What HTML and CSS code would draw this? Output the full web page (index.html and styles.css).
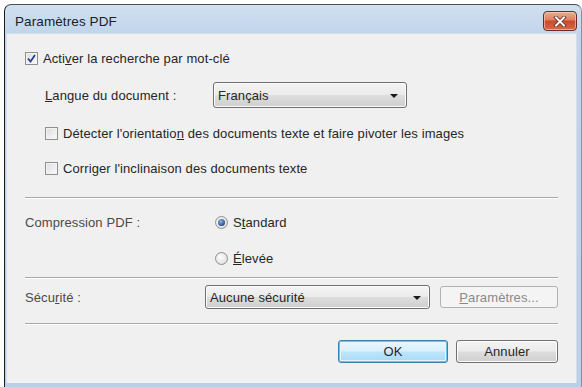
FILE: index.html
```html
<!DOCTYPE html>
<html lang="fr">

<head>
    <meta charset="UTF-8">
    <meta name="viewport" content="width=device-width, initial-scale=1.0">
    <title>Paramètres PDF</title>
    <link rel="stylesheet" href="styles.css">
</head>

<body>

    <div class="window">
        <div class="titlebar">
            <span class="titlebar__text">Paramètres PDF</span>
            <div class="titlebar__close">
                <svg width="14" height="11" viewBox="0 0 14 11">
                    <path d="M3 1.5 L11 9.5 M11 1.5 L3 9.5" stroke="#5a2a20" stroke-width="3.6" stroke-linecap="square"/>
                    <path d="M3 1.5 L11 9.5 M11 1.5 L3 9.5" stroke="#fff" stroke-width="2" stroke-linecap="square"/>
                </svg>
            </div>
        </div>

        <div class="client">
            <div class="row row--first">
                <span class="check check--on">
                    <svg width="9" height="9" viewBox="0 0 9 9"><path d="M1 4.5 L3.5 7.5 L8 1" fill="none" stroke="#2b3f8c" stroke-width="1.8"/></svg>
                </span>
                <span class="row__text">Acti<u>v</u>er la recherche par mot-clé</span>
            </div>

            <div class="row row--field row--indent row--lang">
                <span class="field__label field__label--lang"><u>L</u>angue du document :</span>
                <div class="combo combo--lang">
                    <span>Français</span>
                    <span class="combo__arrow"></span>
                </div>
            </div>

            <div class="row row--indent row--check2">
                <span class="check"></span>
                <span class="row__text">Détecter l'orientatio<u>n</u> des documents texte et faire pivoter les images</span>
            </div>

            <div class="row row--indent row--check3">
                <span class="check"></span>
                <span class="row__text">Corri<u>g</u>er l'inclinaison des documents texte</span>
            </div>

            <div class="sep sep--1"></div>

            <div class="row row--comp">
                <span class="field__label field__label--comp field__label--muted">Compression PDF :</span>
                <span class="radio radio--on"></span>
                <span class="row__text">S<u>t</u>andard</span>
            </div>

            <div class="row row--elev">
                <span class="field__label field__label--comp"></span>
                <span class="radio"></span>
                <span class="row__text"><u>É</u>levée</span>
            </div>

            <div class="sep sep--2"></div>

            <div class="row row--field row--sec">
                <span class="field__label field__label--sec field__label--muted">Sécu<u>r</u>ité :</span>
                <div class="combo combo--sec">
                    <span>Aucune sécurité</span>
                    <span class="combo__arrow"></span>
                </div>
                <div class="btn btn--disabled"><u>P</u>aramètres...</div>
            </div>

            <div class="sep sep--3"></div>

            <div class="buttons">
                <div class="btn btn--default">OK</div>
                <div class="btn btn--cancel">Annuler</div>
            </div>
        </div>
    </div>

</body>

</html>
```

FILE: styles.css
```css
* {
    margin: 0;
    padding: 0;
    box-sizing: border-box;
}

:root {
    --text: #262626;
    --sep: #a0a0a0;
}

body {
    font-family: "Liberation Sans", Arial, sans-serif;
    font-size: 13px;
    letter-spacing: 0.1px;
    color: var(--text);
    background: #ffffff;
    width: 582px;
    height: 387px;
    overflow: hidden;
}

.window {
    margin: 4px 0 0 4px;
    width: 578px;
    height: 383px;
    border-top: 1px solid #4d4f55;
    border-left: 1px solid #1b1b1b;
    border-right: 1px solid #8193a8;
    border-radius: 7px 7px 0 0;
    background: linear-gradient(to bottom, #d0e0f0 0, #c0d5eb 30px, #bad0e8 100%);
    padding: 0 4px 4px 1px;
    display: flex;
    flex-direction: column;
}

.titlebar {
    height: 28px;
    display: flex;
    align-items: center;
    justify-content: space-between;
    padding-left: 9px;
    padding-right: 0;
}

.titlebar__text {
    font-size: 13.5px;
    color: #1c1c2c;
    margin-top: 4px;
}

.titlebar__close {
    width: 34px;
    height: 20px;
    margin-top: 4px;
    border: 1px solid #6b2a22;
    border-radius: 4px;
    background: linear-gradient(to bottom, #eeac92 0, #de7f5e 45%, #c9482a 50%, #d8694a 100%);
    display: flex;
    align-items: center;
    justify-content: center;
    box-shadow: inset 0 0 0 1px rgba(255, 210, 200, .6);
}

.client {
    flex: 1;
    background: #f0f0f0;
    border: 1px solid #d4dde8;
    border-bottom: none;
    padding: 13px 18px 0 18px;
    display: flex;
    flex-direction: column;
}

.row {
    display: flex;
    align-items: center;
    height: 22px;
}

.row--field {
    height: 26px;
}

.row--indent {
    padding-left: 20px;
}

.row--lang { margin-top: 13px; }
.row--check2 { margin-top: 14px; }
.row--check3 { margin-top: 13px; }
.row--comp { margin-top: 12px; }
.row--elev { margin-top: 14px; }
.row--sec { margin-top: 5px; }

.row__text {
    white-space: nowrap;
}

.check {
    width: 13px;
    height: 13px;
    border: 1px solid #8e8f8f;
    background: linear-gradient(135deg, #dcdcdc, #fbfbfb);
    box-shadow: inset 0 0 0 1px #f4f4f4;
    margin: 0 5px 0 0;
    display: flex;
    align-items: center;
    justify-content: center;
    flex-shrink: 0;
}

.radio {
    width: 13px;
    height: 13px;
    border-radius: 50%;
    border: 1px solid #8e8f8f;
    background: radial-gradient(circle at 40% 40%, #fdfdfd, #d6d6d6);
    margin-right: 5px;
    flex-shrink: 0;
    position: relative;
}

.radio--on::after {
    content: "";
    position: absolute;
    left: 2px;
    top: 2px;
    width: 7px;
    height: 7px;
    border-radius: 50%;
    background: radial-gradient(circle at 40% 35%, #8fb4dc, #2a4f8a 70%);
}

.field__label {
    white-space: nowrap;
    flex-shrink: 0;
}

.field__label--muted {
    color: #4a4a4a;
}

.field__label--lang { width: 168px; }
.field__label--comp { width: 190px; }
.field__label--sec { width: 180px; }

.combo {
    height: 26px;
    border: 1px solid #707070;
    border-radius: 3px;
    background: linear-gradient(to bottom, #f4f4f4 0, #ebebeb 48%, #dddddd 52%, #cfcfcf 100%);
    box-shadow: inset 0 0 0 1px #fbfbfb;
    display: flex;
    align-items: center;
    justify-content: space-between;
    padding: 0 8px 0 4px;
}

.combo--lang { width: 194px; }

.combo--sec {
    width: 225px;
    height: 24px;
}

.combo__arrow {
    width: 0;
    height: 0;
    border-left: 4px solid transparent;
    border-right: 4px solid transparent;
    border-top: 4px solid #1a1a1a;
    margin-top: 1px;
}

.sep {
    height: 2px;
    border-top: 1px solid #a9a9a9;
    border-bottom: 1px solid #ffffff;
}

.sep--1 { margin-top: 18px; }
.sep--2 { margin-top: 8px; }
.sep--3 { margin-top: 13px; }

.btn {
    height: 23px;
    border: 1px solid #707070;
    border-radius: 3px;
    background: linear-gradient(to bottom, #f3f3f3 0, #ebebeb 48%, #dddddd 52%, #cfcfcf 100%);
    box-shadow: inset 0 0 0 1px #fcfcfc;
    display: flex;
    align-items: center;
    justify-content: center;
    white-space: nowrap;
}

.btn--disabled {
    width: 118px;
    height: 22px;
    margin-left: 10px;
    border-color: #adb2b5;
    background: #f4f4f4;
    box-shadow: none;
    color: #8a8a8a;
}

.buttons {
    display: flex;
    justify-content: flex-end;
    gap: 8px;
    margin-top: 15px;
}

.btn--default {
    width: 110px;
    border-color: #3c7fb1;
    background: linear-gradient(to bottom, #eaf6fd 0, #d9f0fc 48%, #bee6fd 52%, #a7d9f5 100%);
    box-shadow: inset 0 0 0 1px #70c0e7, inset 0 0 0 2px #e6f4fb;
}

.btn--cancel {
    width: 102px;
}
```
